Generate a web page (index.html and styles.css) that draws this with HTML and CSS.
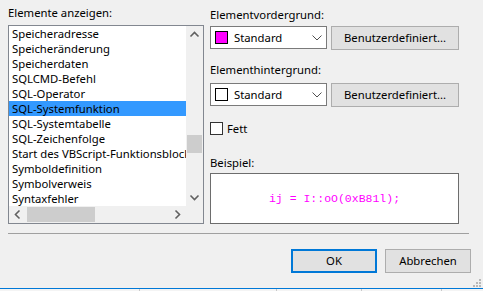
FILE: index.html
```
<!DOCTYPE html>
<html lang="de">
<head>
<meta charset="utf-8">
<title>Schriftarten und Farben</title>
<link rel="stylesheet" href="styles.css">
</head>
<body>
<div class="content">
  <div class="left">
    <div class="label">Elemente anzeigen:</div>
    <div class="listbox">
      <div class="list">
        <div class="item">Speicheradresse</div>
        <div class="item">Speicheränderung</div>
        <div class="item">Speicherdaten</div>
        <div class="item">SQLCMD-Befehl</div>
        <div class="item">SQL-Operator</div>
        <div class="item selected">SQL-Systemfunktion</div>
        <div class="item">SQL-Systemtabelle</div>
        <div class="item">SQL-Zeichenfolge</div>
        <div class="item">Start des VBScript-Funktionsblocks</div>
        <div class="item">Symboldefinition</div>
        <div class="item">Symbolverweis</div>
        <div class="item">Syntaxfehler</div>
      </div>
      <div class="vscroll">
        <div class="sbtn"><svg width="17" height="17" viewBox="0 0 17 17"><path d="M4.5 10.5 L8.5 6.5 L12.5 10.5" fill="none" stroke="#606060" stroke-width="1.6"/></svg></div>
        <div class="vtrack"><div class="vthumb"></div></div>
        <div class="sbtn"><svg width="17" height="17" viewBox="0 0 17 17"><path d="M4.5 6.5 L8.5 10.5 L12.5 6.5" fill="none" stroke="#606060" stroke-width="1.6"/></svg></div>
      </div>
      <div class="hscroll">
        <div class="sbtn"><svg width="17" height="17" viewBox="0 0 17 17"><path d="M10.5 4.5 L6.5 8.5 L10.5 12.5" fill="none" stroke="#606060" stroke-width="1.6"/></svg></div>
        <div class="htrack"><div class="hthumb"></div></div>
        <div class="sbtn"><svg width="17" height="17" viewBox="0 0 17 17"><path d="M6.5 4.5 L10.5 8.5 L6.5 12.5" fill="none" stroke="#606060" stroke-width="1.6"/></svg></div>
      </div>
      <div class="corner"></div>
    </div>
  </div>
  <div class="right">
    <div class="label first">Elementvordergrund:</div>
    <div class="row">
      <div class="combo">
        <span class="swatch magenta"></span>
        <span class="combo-text">Standard</span>
        <svg class="chev" width="10" height="6" viewBox="0 0 10 6"><path d="M0.5 0.5 L5 5 L9.5 0.5" fill="none" stroke="#505050" stroke-width="1"/></svg>
      </div>
      <div class="button">Benutzerdefiniert...</div>
    </div>
    <div class="label second">Elementhintergrund:</div>
    <div class="row">
      <div class="combo">
        <span class="swatch white"></span>
        <span class="combo-text">Standard</span>
        <svg class="chev" width="10" height="6" viewBox="0 0 10 6"><path d="M0.5 0.5 L5 5 L9.5 0.5" fill="none" stroke="#505050" stroke-width="1"/></svg>
      </div>
      <div class="button">Benutzerdefiniert...</div>
    </div>
    <div class="check-row">
      <span class="checkbox"></span>
      <span class="check-label">Fett</span>
    </div>
    <div class="label third">Beispiel:</div>
    <div class="sample"><span class="sample-text">ij = I::oO(0xB81l);</span></div>
  </div>
</div>
<div class="separator"></div>
<div class="buttons">
  <div class="button dlg default">OK</div>
  <div class="button dlg">Abbrechen</div>
</div>
<div class="grip-row">
  <svg class="grip" width="10" height="10" viewBox="0 0 10 10">
    <rect x="7" y="1" width="2" height="2" fill="#b8b8b8"/>
    <rect x="4" y="4" width="2" height="2" fill="#b8b8b8"/>
    <rect x="7" y="4" width="2" height="2" fill="#b8b8b8"/>
    <rect x="1" y="7" width="2" height="2" fill="#b8b8b8"/>
    <rect x="4" y="7" width="2" height="2" fill="#b8b8b8"/>
    <rect x="7" y="7" width="2" height="2" fill="#b8b8b8"/>
  </svg>
</div>
<div class="strip">
  <span class="seg s1"></span><span class="seg s2"></span><span class="seg s3"></span><span class="seg s4"></span><span class="seg s5"></span>
</div>
</body>
</html>
```
FILE: styles.css
```
* { box-sizing: border-box; }
html, body { margin: 0; padding: 0; }
body {
  width: 483px;
  height: 291px;
  overflow: hidden;
  background: #f0f0f0;
  font-family: "Noto Sans", "Liberation Sans", sans-serif;
  font-size: 11.3px;
  color: #000;
  display: flex;
  flex-direction: column;
}
.content {
  display: flex;
  gap: 6px;
  padding-left: 8px;
  height: 224px;
}
.left {
  width: 196px;
  display: flex;
  flex-direction: column;
}
.label {
  line-height: 16px;
  height: 16px;
  white-space: nowrap;
}
.left .label { margin-top: 5px; margin-bottom: 4px; }
.listbox {
  height: 199px;
  border: 1px solid #828790;
  background: #fff;
  display: grid;
  grid-template-columns: 177px 17px;
  grid-template-rows: 180px 17px;
}
.list { overflow: hidden; }
.item {
  height: 15px;
  line-height: 15px;
  padding-left: 3px;
  white-space: nowrap;
  overflow: hidden;
}
.item.selected { background: #3399ff; }
.vscroll {
  grid-row: 1;
  grid-column: 2;
  background: #f0f0f0;
  display: flex;
  flex-direction: column;
}
.sbtn { width: 17px; height: 17px; flex: none; }
.sbtn svg { display: block; }
.vtrack { flex: 1; padding: 0 1px; }
.vthumb { margin-top: 92px; height: 18px; background: #cdcdcd; }
.hscroll {
  grid-row: 2;
  grid-column: 1;
  background: #f0f0f0;
  display: flex;
}
.htrack { flex: 1; padding: 1px 0; }
.hthumb { margin-left: 1px; width: 68px; height: 15px; background: #cdcdcd; }
.corner { grid-row: 2; grid-column: 2; background: #f0f0f0; }

.right {
  width: 249px;
  display: flex;
  flex-direction: column;
}
.right .label.first { margin-top: 7px; margin-bottom: 3px; }
.right .label.second { margin-top: 12px; margin-bottom: 5px; }
.right .label.third { margin-top: 20px; margin-bottom: 2px; }
.row {
  display: flex;
  align-items: flex-start;
  gap: 4px;
}
.combo {
  width: 117px;
  height: 23px;
  border: 1px solid #7a7a7a;
  background: #fff;
  display: flex;
  align-items: center;
  padding-left: 4px;
}
.swatch {
  width: 13px;
  height: 13px;
  border: 1px solid #000;
  flex: none;
}
.swatch.magenta { background: #ff00ff; }
.swatch.white { background: #fff; }
.combo-text { margin-left: 6px; flex: 1; line-height: 16px; }
.chev { margin-right: 4px; display: block; }
.button {
  width: 128px;
  height: 24px;
  background: #e1e1e1;
  border: 1px solid #adadad;
  display: flex;
  align-items: center;
  justify-content: center;
  line-height: 16px;
  white-space: nowrap;
}
.check-row {
  display: flex;
  align-items: center;
  margin-top: 15px;
  height: 13px;
}
.checkbox {
  width: 13px;
  height: 13px;
  border: 1px solid #333;
  background: #fff;
  flex: none;
}
.check-label { margin-left: 4px; line-height: 16px; }
.sample {
  height: 53px;
  border: 1px solid #6d6d6d;
  background: #fff;
  display: flex;
  align-items: center;
  justify-content: center;
}
.sample-text {
  font-family: "Liberation Mono", "DejaVu Sans Mono", monospace;
  font-size: 11.5px;
  color: #ff00ff;
  white-space: pre;
  line-height: 14px;
}
.separator {
  margin-top: 9px;
  margin-left: 8px;
  width: 461px;
  height: 1px;
  background: #a0a0a0;
  flex: none;
}
.buttons {
  margin-top: 15px;
  height: 24px;
  display: flex;
  justify-content: flex-end;
  gap: 8px;
  padding-right: 12px;
  flex: none;
}
.button.dlg { width: 86px; }
.button.default { border: 2px solid #0078d7; }
.grip-row {
  height: 15px;
  display: flex;
  justify-content: flex-end;
  align-items: flex-end;
  flex: none;
}
.grip { display: block; margin-right: 1px; }
.strip {
  height: 3px;
  border-top: 1px solid #0078d7;
  background: #f4f4f4;
  display: flex;
  flex: none;
}
.seg { height: 2px; border-right: 1px solid #c8c8c8; }
.s1 { width: 140px; }
.s2 { width: 137px; }
.s3 { width: 85px; }
.s4 { width: 80px; }
.s5 { flex: 1; border-right: none; }
```
